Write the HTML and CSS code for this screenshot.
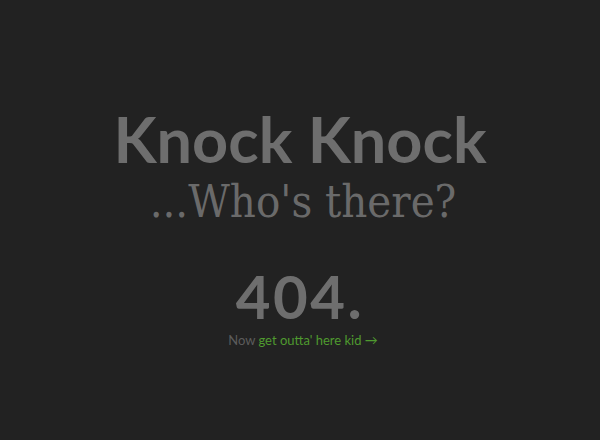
FILE: index.html
```html
<!DOCTYPE html>
<html>
<head>
<meta charset="utf-8">
<link rel="stylesheet" href="styles.css">
</head>
<body>
<main class="page">
  <h1 class="title">Knock Knock</h1>
  <p class="subtitle">...Who's there?</p>
  <p class="code">404.</p>
  <p class="note">Now <a class="link" href="#">get outta' here kid →</a></p>
</main>
</body>
</html>
```

FILE: styles.css
```css
html, body {
  margin: 0;
  padding: 0;
  height: 100%;
  background: #222222;
}
.page {
  display: flex;
  flex-direction: column;
  align-items: center;
  padding-top: 103px;
  color: #6e6e6e;
  font-family: Lato, "Open Sans", sans-serif;
}
.title {
  margin: 0;
  font-size: 63px;
  font-weight: 700;
  line-height: 72px;
}
.subtitle {
  margin: 1px 0 0;
  padding-left: 6px;
  font-family: "DejaVu Serif Condensed", "DejaVu Serif", serif;
  font-weight: 400;
  font-size: 45px;
  line-height: 52px;
  color: #6a6a6a;
}
.code {
  margin: 36px 0 0;
  font-size: 60px;
  font-weight: 700;
  line-height: 64px;
  letter-spacing: 2.5px;
}
.note {
  margin: 4px 0 0;
  padding-left: 6px;
  font-size: 13px;
  line-height: 16px;
  color: #5c5c5c;
}
.link {
  color: #4f9a2f;
  text-decoration: none;
}
```
